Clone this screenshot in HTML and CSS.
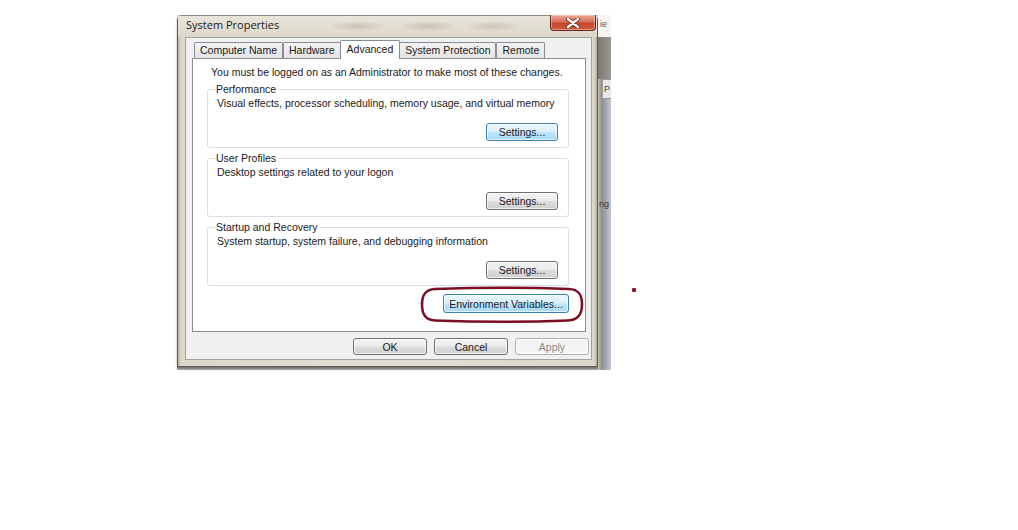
FILE: index.html
```html
<!DOCTYPE html>
<html lang="en">
<head>
<meta charset="utf-8">
<title>System Properties</title>
<link rel="stylesheet" href="styles.css">
</head>
<body>
<div class="page">
  <div class="shot">
    <div class="win">
      <div class="titlebar">
        <span class="title">System Properties</span>
        <span class="close">
          <svg width="16" height="10" viewBox="0 0 16 10">
            <path d="M3 1 L13 9 M13 1 L3 9" stroke="#5a2118" stroke-width="4" stroke-linecap="round"/>
            <path d="M3 1 L13 9 M13 1 L3 9" stroke="#ffffff" stroke-width="2.4" stroke-linecap="round"/>
          </svg>
        </span>
      </div>
      <div class="client">
        <div class="tabs">
          <div class="tab">Computer Name</div>
          <div class="tab">Hardware</div>
          <div class="tab tab-active">Advanced</div>
          <div class="tab">System Protection</div>
          <div class="tab">Remote</div>
        </div>
        <div class="panel">
          <p class="note">You must be logged on as an Administrator to make most of these changes.</p>
          <div class="group">
            <div class="group-title">Performance</div>
            <div class="group-desc">Visual effects, processor scheduling, memory usage, and virtual memory</div>
            <div class="group-actions"><button class="btn btn-focus">Settings...</button></div>
          </div>
          <div class="group">
            <div class="group-title">User Profiles</div>
            <div class="group-desc">Desktop settings related to your logon</div>
            <div class="group-actions"><button class="btn">Settings...</button></div>
          </div>
          <div class="group">
            <div class="group-title">Startup and Recovery</div>
            <div class="group-desc">System startup, system failure, and debugging information</div>
            <div class="group-actions"><button class="btn">Settings...</button></div>
          </div>
          <div class="env-row">
            <div class="env-wrap">
              <button class="btn btn-focus btn-env">Environment Variables...</button>
              <svg class="ring" width="166" height="38" viewBox="0 0 166 38">
                <path d="M16 3 C60 1.5 110 1.5 150 3 C160 3.5 163 9 163 18 C163 29 159 34 149 34.5 C110 36 55 36 16 34.5 C6 34 3 28 3 18.5 C3 9 6 3.5 16 3 Z" fill="none" stroke="#7b0e22" stroke-width="2.6"/>
              </svg>
            </div>
          </div>
        </div>
        <div class="dialog-buttons">
          <button class="btn btn-dlg">OK</button>
          <button class="btn btn-dlg">Cancel</button>
          <button class="btn btn-dlg btn-disabled">Apply</button>
        </div>
      </div>
    </div>
    <div class="strip">
      <span class="strip-top">ie</span>
      <span class="strip-mid"></span>
      <span class="strip-box">P</span>
      <span class="strip-text">ng</span>
    </div>
  </div>
  <span class="dot"></span>
</div>
</body>
</html>
```

FILE: styles.css
```css
* { box-sizing: border-box; }

html, body {
  margin: 0;
  padding: 0;
  background: #ffffff;
}

.page {
  position: relative;
  width: 1018px;
  height: 530px;
  padding: 15px 0 0 177px;
  font-family: "Liberation Sans", Arial, sans-serif;
  font-size: 10.5px;
  color: #1a1a1a;
}

.shot {
  display: flex;
  width: 434px;
  height: 355px;
  background: linear-gradient(#d8d8d8, #b9b9b9);
}

.win {
  width: 421px;
  height: 352px;
  display: flex;
  flex-direction: column;
  border: 1px solid #5d5a52;
  border-top-color: #8f8a7e;
  border-radius: 5px 5px 0 0;
  padding: 0 5px 6px 7px;
  background: linear-gradient(90deg, #b9b3a5 0px, #dcd7cb 3px, #e3ded3 50%, #dcd7cb calc(100% - 3px), #b4ae9f 100%);
  box-shadow: 0 2px 2px rgba(60, 60, 60, 0.55);
}

.titlebar {
  display: flex;
  justify-content: space-between;
  align-items: flex-start;
  height: 21px;
  margin: 0 -5px 0 -7px;
  padding: 0 0 0 8px;
  background:
    radial-gradient(ellipse 30px 5px at 180px 10px, rgba(120, 110, 90, 0.25), transparent),
    radial-gradient(ellipse 30px 5px at 250px 10px, rgba(120, 110, 90, 0.25), transparent),
    radial-gradient(ellipse 30px 5px at 315px 10px, rgba(120, 110, 90, 0.22), transparent),
    linear-gradient(#e9e5db, #ddd7c9);
}

.title {
  font-family: "Open Sans", "Liberation Sans", sans-serif;
  font-size: 11px;
  line-height: 13px;
  margin-top: 2px;
  color: #1b1b1b;
}

.close {
  display: flex;
  align-items: center;
  justify-content: center;
  width: 46px;
  height: 16px;
  margin-top: -1px;
  margin-right: 1px;
  border: 1px solid #6a2a1f;
  border-top: none;
  border-radius: 0 0 4px 4px;
  background: linear-gradient(#e9ab9a 0%, #d7705a 45%, #c6462e 55%, #cf5a3e 100%);
  box-shadow: inset 0 0 0 1px rgba(255, 220, 200, 0.45);
}

.client {
  flex: 1;
  display: flex;
  flex-direction: column;
  background: #f0f0f0;
  border: 1px solid #a6a196;
  padding: 3px 5px 0 6px;
}

.tabs {
  display: flex;
  align-items: flex-end;
  padding-left: 2px;
  height: 17px;
  position: relative;
  z-index: 1;
}

.tab {
  height: 16px;
  line-height: 14px;
  padding: 0 5px;
  border: 1px solid #898c95;
  border-bottom: none;
  border-radius: 2px 2px 0 0;
  background: linear-gradient(#f3f3f3, #e4e4e4);
  white-space: nowrap;
}

.tab-active {
  height: 19px;
  margin: 0 -1px -1px -1px;
  padding: 1px 6px 0 6px;
  background: #ffffff;
  border-color: #898c95;
}

.panel {
  background: #ffffff;
  border: 1px solid #898c95;
  padding: 7px 16px 18px 0;
  height: 274px;
}

.note {
  margin: 0;
  padding-left: 18px;
  line-height: 13px;
  white-space: nowrap;
}

.group {
  margin: 10px 0 0 14px;
  height: 59px;
  border: 1px solid #d5dfe5;
  border-radius: 3px;
  padding: 0 10px 0 8px;
}

.group-title {
  display: block;
  width: fit-content;
  margin-top: -7px;
  padding: 0 2px 0 0;
  line-height: 13px;
  height: 13px;
  background: #ffffff;
}

.group-desc {
  line-height: 13px;
  padding-left: 1px;
  margin-top: 1px;
  white-space: nowrap;
}

.group-actions {
  display: flex;
  justify-content: flex-end;
  margin-top: 13px;
}

.btn {
  font-family: "Liberation Sans", Arial, sans-serif;
  font-size: 10.5px;
  color: #1a1a1a;
  width: 72px;
  height: 18px;
  padding: 0;
  border: 1px solid #707070;
  border-radius: 3px;
  background: linear-gradient(#f2f2f2 0%, #ebebeb 48%, #dddddd 52%, #cfcfcf 100%);
  box-shadow: inset 0 0 0 1px rgba(255, 255, 255, 0.7);
}

.btn-focus {
  border-color: #3c7fb1;
  background: linear-gradient(#eaf6fd 0%, #d9f0fc 48%, #bee6fd 52%, #a7d9f5 100%);
}

.env-row {
  display: flex;
  justify-content: flex-end;
  margin-top: 8px;
  padding-right: 0;
}

.env-wrap {
  position: relative;
}

.btn-env {
  width: 126px;
  height: 19px;
  display: block;
}

.ring {
  position: absolute;
  left: -24px;
  top: -8px;
  pointer-events: none;
}

.dialog-buttons {
  display: flex;
  justify-content: flex-end;
  gap: 7px;
  margin: 6px -3px 0 0;
}

.btn-dlg {
  width: 74px;
  height: 17px;
}

.btn-disabled {
  color: #8a8a8a;
  border-color: #adb2b5;
  background: #f4f4f4;
}

.strip {
  width: 13px;
  height: 355px;
  display: flex;
  flex-direction: column;
  background: linear-gradient(90deg, #c9c3b2 0px, #a7a294 2px, #8b909b 4px, #a3a8b1 8px, #c6c9cf 13px);
  overflow: hidden;
  font-size: 9px;
}

.strip-top {
  height: 22px;
  padding: 4px 0 0 2px;
  background: #f4f4f4;
  color: #555;
}

.strip-mid {
  height: 42px;
  background: linear-gradient(90deg, #7d7a72, #9a9890);
}

.strip-box {
  height: 20px;
  margin-left: 4px;
  padding-left: 1px;
  line-height: 18px;
  background: #e9e9e9;
  border: 1px solid #9a9a9a;
  border-right: none;
  color: #444;
}

.strip-text {
  margin-top: 100px;
  padding-left: 1px;
  color: #333;
}

.dot {
  position: absolute;
  left: 632px;
  top: 288px;
  width: 4px;
  height: 4px;
  background: #8b1a2a;
  border-radius: 1px;
}
```
